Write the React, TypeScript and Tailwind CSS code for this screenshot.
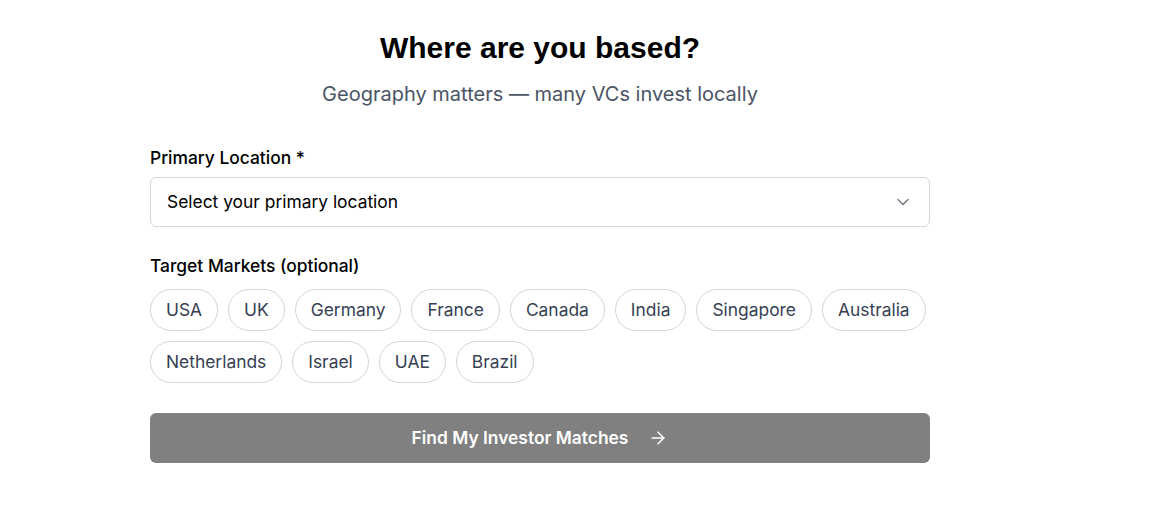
import { ArrowRight, ChevronDown } from "lucide-react";

const markets = [
  "USA",
  "UK",
  "Germany",
  "France",
  "Canada",
  "India",
  "Singapore",
  "Australia",
  "Netherlands",
  "Israel",
  "UAE",
  "Brazil",
];

export default function App() {
  return (
    <div className="min-h-screen bg-white font-['Inter',sans-serif]">
      <div className="ml-[150px] w-[780px] pt-[30px]">
        <h1 className="text-center font-['Liberation_Sans',Arial,sans-serif] text-[30px] font-bold leading-9 text-black">
          Where are you based?
        </h1>
        <p className="mt-[14px] text-center text-[20px] leading-7 text-gray-600">
          Geography matters — many VCs invest locally
        </p>

        <div className="mt-[38px]">
          <label className="block text-[17.4px] font-medium leading-6 text-black">
            Primary Location *
          </label>
          <button
            type="button"
            className="mt-[7px] flex h-[50px] w-full items-center justify-between rounded-md border border-gray-300 bg-white px-4 text-left text-[17.4px] text-black"
          >
            <span>Select your primary location</span>
            <ChevronDown className="h-5 w-5 text-gray-500" strokeWidth={1.6} />
          </button>
        </div>

        <div className="mt-[27px]">
          <label className="block text-[17.4px] font-medium leading-6 text-black">
            Target Markets (optional)
          </label>
          <div className="mt-[11px] flex flex-wrap gap-2.5">
            {markets.map((m) => (
              <button
                key={m}
                type="button"
                className="rounded-full border border-gray-300 bg-white px-[15px] py-2 text-[17.4px] leading-6 text-gray-700"
              >
                {m}
              </button>
            ))}
          </div>
        </div>

        <button
          type="button"
          disabled
          className="mt-[30px] flex h-[50px] w-full items-center justify-center rounded-md bg-[#808080] text-[17.4px] font-semibold text-white"
        >
          <span>Find My Investor Matches</span>
          <ArrowRight className="ml-5 h-5 w-5" strokeWidth={1.8} />
        </button>
      </div>
    </div>
  );
}
